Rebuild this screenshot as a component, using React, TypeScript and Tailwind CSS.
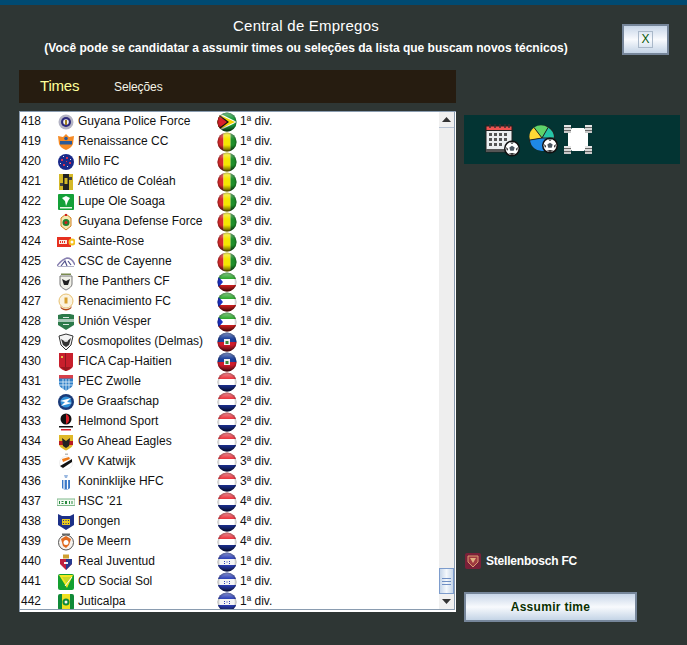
import { useId, type ReactNode } from "react";

type FlagId = "gy" | "gf" | "gq" | "ht" | "nl" | "hn";

type Row = { n: number; name: string; flag: FlagId; div: string };

const ROWS: Row[] = [
  { n: 418, name: "Guyana Police Force", flag: "gy", div: "1" },
  { n: 419, name: "Renaissance CC", flag: "gf", div: "1" },
  { n: 420, name: "Milo FC", flag: "gf", div: "1" },
  { n: 421, name: "Atlético de Coléah", flag: "gf", div: "1" },
  { n: 422, name: "Lupe Ole Soaga", flag: "gf", div: "2" },
  { n: 423, name: "Guyana Defense Force", flag: "gf", div: "3" },
  { n: 424, name: "Sainte-Rose", flag: "gf", div: "3" },
  { n: 425, name: "CSC de Cayenne", flag: "gf", div: "3" },
  { n: 426, name: "The Panthers CF", flag: "gq", div: "1" },
  { n: 427, name: "Renacimiento FC", flag: "gq", div: "1" },
  { n: 428, name: "Unión Vésper", flag: "gq", div: "1" },
  { n: 429, name: "Cosmopolites (Delmas)", flag: "ht", div: "1" },
  { n: 430, name: "FICA Cap-Haitien", flag: "ht", div: "1" },
  { n: 431, name: "PEC Zwolle", flag: "nl", div: "1" },
  { n: 432, name: "De Graafschap", flag: "nl", div: "2" },
  { n: 433, name: "Helmond Sport", flag: "nl", div: "2" },
  { n: 434, name: "Go Ahead Eagles", flag: "nl", div: "2" },
  { n: 435, name: "VV Katwijk", flag: "nl", div: "3" },
  { n: 436, name: "Koninklijke HFC", flag: "nl", div: "3" },
  { n: 437, name: "HSC '21", flag: "nl", div: "4" },
  { n: 438, name: "Dongen", flag: "nl", div: "4" },
  { n: 439, name: "De Meern", flag: "nl", div: "4" },
  { n: 440, name: "Real Juventud", flag: "hn", div: "1" },
  { n: 441, name: "CD Social Sol", flag: "hn", div: "1" },
  { n: 442, name: "Juticalpa", flag: "hn", div: "1" },
];

function FlagArt({ flag }: { flag: FlagId }) {
  switch (flag) {
    case "gy":
      return (
        <>
          <rect width="20" height="20" fill="#1a9a3a" />
          <path d="M0 0L20 10L0 20Z" fill="#fff" />
          <path d="M0 1.500L18 10L0 18.500Z" fill="#f5d400" />
          <path d="M0 1L12 10L0 19Z" fill="#111" />
          <path d="M0 2.500L10 10L0 17.500Z" fill="#d8202a" />
        </>
      );
    case "gf":
      return (
        <>
          <rect width="6.500" height="20" fill="#d42a2a" />
          <rect x="6.500" width="7" height="20" fill="#f6e800" />
          <rect x="13.500" width="6.500" height="20" fill="#1f8f2c" />
        </>
      );
    case "gq":
      return (
        <>
          <rect width="20" height="7" fill="#2aa52a" />
          <rect y="7" width="20" height="6" fill="#fff" />
          <rect y="13" width="20" height="7" fill="#d42020" />
          <path d="M0 3L6 10L0 17Z" fill="#1a2fc0" />
        </>
      );
    case "ht":
      return (
        <>
          <rect width="20" height="10" fill="#1c3f9a" />
          <rect y="10" width="20" height="10" fill="#d01c2c" />
          <rect x="7" y="7" width="6" height="6" fill="#f4f4f4" />
          <rect x="8.500" y="9" width="3" height="3" fill="#3a8a3a" />
        </>
      );
    case "nl":
      return (
        <>
          <rect width="20" height="7" fill="#e8323c" />
          <rect y="7" width="20" height="6" fill="#fff" />
          <rect y="13" width="20" height="7" fill="#1b2f90" />
        </>
      );
    case "hn":
      return (
        <>
          <rect width="20" height="7" fill="#2b3fb5" />
          <rect y="7" width="20" height="6" fill="#f4f4f4" />
          <rect y="13" width="20" height="7" fill="#2b3fb5" />
          <path d="M7 9h1v1H7zM12 9h1v1h-1zM9.500 9.500h1v1h-1zM7 11h1v1H7zM12 11h1v1h-1z" fill="#2b3fb5" />
        </>
      );
  }
}

function FlagBall({ flag }: { flag: FlagId }) {
  const id = useId();
  return (
    <svg width="20" height="20" viewBox="0 0 20 20" className="shrink-0">
      <defs>
        <clipPath id={`${id}c`}>
          <circle cx="10" cy="10" r="9.600" />
        </clipPath>
        <linearGradient id={`${id}l`} x1="0" y1="0" x2="0" y2="1">
          <stop offset="0" stopColor="#fff" stopOpacity="0.5" />
          <stop offset="0.35" stopColor="#fff" stopOpacity="0" />
          <stop offset="0.65" stopColor="#000" stopOpacity="0" />
          <stop offset="1" stopColor="#000" stopOpacity="0.7" />
        </linearGradient>
        <radialGradient id={`${id}r`} cx="0.5" cy="0.5" r="0.5">
          <stop offset="0.72" stopColor="#000" stopOpacity="0" />
          <stop offset="1" stopColor="#000" stopOpacity="0.35" />
        </radialGradient>
      </defs>
      <g clipPath={`url(#${id}c)`}>
        <FlagArt flag={flag} />
        <rect width="20" height="20" fill={`url(#${id}l)`} />
        <rect width="20" height="20" fill={`url(#${id}r)`} />
      </g>
    </svg>
  );
}

const SHIELD = "M2 2H16V11C16 14 12 16 9 17.500C6 16 2 14 2 11Z";

// tiny club crests, only blobs of the right colours at this size
const CRESTS: Record<number, ReactNode> = {
  418: (
    <>
      <circle cx="9" cy="9" r="7.500" fill="#b4b4c4" />
      <circle cx="9" cy="9" r="5" fill="#2d2a7a" />
      <circle cx="9" cy="9" r="2.800" fill="#f2f2f2" />
      <rect x="8" y="7" width="2" height="5" fill="#a08020" />
    </>
  ),
  419: (
    <>
      <path d="M1 3L6 4L9 1L12 4L17 3L16 11C15 14 12 16 9 17C6 16 3 14 2 11Z" fill="#f58a24" />
      <rect x="3" y="8" width="12" height="3.500" fill="#2a5a9a" />
      <circle cx="9" cy="5.500" r="1.800" fill="#2a5a9a" />
    </>
  ),
  420: (
    <>
      <circle cx="9" cy="9" r="8" fill="#1a2a8a" />
      <path d="M4 6h2v2H4zM9 4h2v2H9zM12 9h2v2h-2zM6 11h2v2H6zM9 8h1v1H9z" fill="#d03050" />
      <path d="M6 3h1v1H6zM13 6h1v1h-1zM3 10h1v1H3zM10 13h1v1h-1z" fill="#e8e8f8" />
    </>
  ),
  421: (
    <>
      <rect x="2" y="1" width="14" height="16" fill="#d4b828" />
      <rect x="6" y="1" width="6" height="16" fill="#222" />
      <rect x="7.500" y="5" width="3" height="6" fill="#d4b828" />
      <rect x="3" y="10" width="3" height="3" fill="#444" />
      <rect x="12" y="4" width="3" height="3" fill="#444" />
    </>
  ),
  422: (
    <>
      <rect x="1" y="1" width="16" height="16" rx="1" fill="#14a038" />
      <path d="M5 5L9 3L13 5L11 8L9 13L8 8Z" fill="#fff" />
      <rect x="3" y="14" width="12" height="1.500" fill="#e8f8e8" />
    </>
  ),
  423: (
    <>
      <path d="M9 1L14 5V13L9 17L4 13V5Z" fill="#f4e8b0" stroke="#d08020" strokeWidth="1" />
      <circle cx="9" cy="9.500" r="3.500" fill="#208030" />
      <circle cx="9" cy="9.500" r="1.500" fill="#d02020" />
      <rect x="8" y="1" width="2" height="2" fill="#d02020" />
    </>
  ),
  424: (
    <>
      <rect x="0" y="4" width="14" height="10" fill="#e63020" />
      <rect x="2" y="7" width="8" height="4" fill="#f8e8e0" />
      <path d="M3 8h1v2H3zM5 8h1v2H5zM7 8h1v2H7z" fill="#e63020" />
      <circle cx="15" cy="9" r="3.500" fill="#f4c020" />
      <circle cx="15" cy="9" r="1.500" fill="#fff" />
    </>
  ),
  425: (
    <>
      <path d="M0 13C3 9 6 6 10 5C13 5 16 7 18 12" fill="none" stroke="#8880b0" strokeWidth="1.500" />
      <path d="M4 13L8 8L10 13M11 8L14 12" fill="none" stroke="#50508a" strokeWidth="1.200" />
      <rect x="1" y="13" width="16" height="1" fill="#b0b0c8" />
    </>
  ),
  426: (
    <>
      <path d="M3 3H15V11C15 14 11 16 9 17C7 16 3 14 3 11Z" fill="#f0f0e8" stroke="#777" strokeWidth="1" />
      <path d="M5 6L9 8L13 6L11 12H7Z" fill="#222" />
      <rect x="4" y="0.500" width="10" height="1.500" fill="#7a8a50" />
    </>
  ),
  427: (
    <>
      <circle cx="9" cy="8" r="7" fill="#fbf3df" stroke="#e8c070" strokeWidth="1" />
      <rect x="7.500" y="4.500" width="3" height="6" fill="#d8a030" />
      <path d="M3 13C6 17 12 17 15 13L14 15.500C11 18 7 18 4 15.500Z" fill="#b04818" />
    </>
  ),
  428: (
    <>
      <path d="M1 2L5 1H13L17 2V12L9 17L1 12Z" fill="#2c7a4a" />
      <rect x="1" y="6" width="16" height="3" fill="#a8c8b8" />
      <path d="M6 4h6v1H6zM6 11h6v1H6z" fill="#d8e8e0" />
    </>
  ),
  429: (
    <>
      <path d="M2 3L9 1L16 3L14 12L9 17L4 12Z" fill="#f4f4f4" stroke="#333" strokeWidth="1" />
      <path d="M4 6L9 9L14 5L12 12L9 14L6 12Z" fill="#333" />
      <rect x="7" y="7" width="4" height="1.500" fill="#ddd" />
    </>
  ),
  430: (
    <>
      <path d="M2 0H16V13C16 15 12 17.500 9 18C6 17.500 2 15 2 13Z" fill="#c81f2c" />
      <rect x="8" y="0" width="1" height="18" fill="#8a1820" />
      <rect x="4" y="3" width="2" height="2" fill="#e8c050" />
      <path d="M3 14L15 14L9 18Z" fill="#9a1820" />
    </>
  ),
  431: (
    <>
      <path d={SHIELD} fill="#2f80c8" />
      <rect x="2" y="2" width="14" height="3.500" fill="#d8404a" />
      <path d="M2 9H16M2 12H16M6 6V16M9 6V17M12 6V16" stroke="#e8f4fc" strokeWidth="0.800" />
    </>
  ),
  432: (
    <>
      <circle cx="9" cy="9" r="8" fill="#1a3a78" />
      <circle cx="9" cy="9" r="5.500" fill="#2f90d8" />
      <path d="M3 8L14 5L10 9L15 10L4 13L8 9Z" fill="#fff" />
    </>
  ),
  433: (
    <>
      <circle cx="9" cy="6" r="5.500" fill="#111" />
      <path d="M9 1A5.500 5.500 0 0 1 9 11Z" fill="#d82028" />
      <rect x="2" y="13" width="14" height="1.500" fill="#111" />
      <rect x="4" y="16" width="10" height="1.500" fill="#d82028" />
    </>
  ),
  434: (
    <>
      <path d={SHIELD} fill="#e0b828" />
      <rect x="2" y="8" width="14" height="4" fill="#b81c24" />
      <path d="M5 5L9 8L13 5L12 13L9 15L6 13Z" fill="#222" />
    </>
  ),
  435: (
    <>
      <circle cx="9" cy="10" r="6.500" fill="#fff" stroke="#ddd" strokeWidth="0.500" />
      <path d="M3 13L15 6L15 9L6 15Z" fill="#111" />
      <path d="M5 6L12 4L13 6L6 9Z" fill="#ee7a18" />
      <rect x="8" y="0.500" width="3" height="1.500" fill="#bbb" />
    </>
  ),
  436: (
    <>
      <path d="M5 7H13V15C11 17 7 17 5 15Z" fill="#3a78c8" />
      <path d="M7 7V16M10.500 7V16" stroke="#fff" strokeWidth="1.200" />
      <path d="M7 2H11L10 5H8Z" fill="#9ab8e0" />
    </>
  ),
  437: (
    <>
      <rect x="0" y="6" width="18" height="6.500" fill="#f4faf4" stroke="#60a870" strokeWidth="0.800" />
      <path d="M2 8h1v3H2zM4.500 8h2v1h-2zM4.500 10h2v1h-2zM8 8h2v3H8zM12 8h1v3h-1zM14.500 8h1v3h-1z" fill="#2a8a40" />
    </>
  ),
  438: (
    <>
      <path d="M1 1L5 3H13L17 1V12L9 17L1 12Z" fill="#1c3088" />
      <path d="M5 6h8v6H5z" fill="#e8c820" />
      <path d="M6 7h1v1H6zM8.500 7h1v1h-1zM11 7h1v1h-1zM6 10h1v1H6zM8.500 10h1v1h-1zM11 10h1v1h-1z" fill="#1c3088" />
    </>
  ),
  439: (
    <>
      <circle cx="9" cy="9.500" r="7.500" fill="#f6f2ee" stroke="#555" strokeWidth="1" />
      <path d="M4 6L9 3L14 6L12 12L9 15L6 13Z" fill="#e06a20" />
      <circle cx="9" cy="9.500" r="2.500" fill="#fff" />
      <rect x="5" y="0.500" width="8" height="1.500" fill="#666" />
    </>
  ),
  440: (
    <>
      <path d="M3 6H15V11L9 17L3 11Z" fill="#c02040" />
      <path d="M9 6H15V11L9 17Z" fill="#283a90" />
      <rect x="6" y="1.500" width="6" height="4" fill="#d0a030" />
      <rect x="7" y="9" width="4" height="2" fill="#f4f4f4" />
    </>
  ),
  441: (
    <>
      <rect x="1" y="1" width="16" height="16" rx="2" fill="#14a030" />
      <path d="M2 2H16L10 15Z" fill="#f2e820" />
      <path d="M5 4H14L10 11Z" fill="#c8d828" />
      <path d="M8 13L15 4" stroke="#f8f8f8" strokeWidth="1" />
    </>
  ),
  442: (
    <>
      <rect x="1" y="1" width="16" height="16" rx="2" fill="#108a38" />
      <rect x="5" y="1" width="8" height="16" fill="#f0e020" />
      <circle cx="9" cy="9" r="3.500" fill="#108a38" />
      <circle cx="9" cy="9" r="1.500" fill="#f4f4f4" />
    </>
  ),
};

function Crest({ n }: { n: number }) {
  return (
    <svg width="18" height="18" viewBox="0 0 18 18" className="mb-[1px] shrink-0">
      {CRESTS[n]}
    </svg>
  );
}

function ListRow({ row }: { row: Row }) {
  return (
    <div className="flex h-5 shrink-0 items-center text-[12px] text-[#111]">
      <span className="mb-[2px] ml-[1px] w-[36px] shrink-0">{row.n}</span>
      <Crest n={row.n} />
      <span className="mb-[2px] ml-[3px] w-[139px] shrink-0 whitespace-nowrap tracking-[0.02px]">{row.name}</span>
      <FlagBall flag={row.flag} />
      <span className="mb-[2px] ml-[3px] whitespace-nowrap">{row.div}ª div.</span>
    </div>
  );
}

function Arrow({ up }: { up?: boolean }) {
  return (
    <svg width="9" height="5" viewBox="0 0 9 5">
      <path d={up ? "M4.500 0L9 5H0Z" : "M0 0H9L4.500 5Z"} fill="#333" />
    </svg>
  );
}

function ScrollBar() {
  return (
    <div className="flex w-[15px] shrink-0 flex-col bg-[#eeeeee]">
      <div className="flex h-[16px] items-center justify-center border-b border-[#b8c4d4] bg-[#f0f0f0]">
        <Arrow up />
      </div>
      <div className="flex-1" />
      <div className="flex h-[26px] flex-col items-center justify-center gap-[2px] border border-[#7d9ccc] bg-gradient-to-r from-[#c6d6ea] via-[#f4f8fc] to-[#c6d6ea]">
        <div className="h-px w-[9px] bg-[#6f8fc4]" />
        <div className="h-px w-[9px] bg-[#6f8fc4]" />
        <div className="h-px w-[9px] bg-[#6f8fc4]" />
      </div>
      <div className="flex h-[15px] items-center justify-center bg-[#f0f0f0]">
        <Arrow />
      </div>
    </div>
  );
}

function SoccerBall({ x, y }: { x: number; y: number }) {
  return (
    <g transform={`translate(${x} ${y})`}>
      <circle r="8" fill="#111" />
      <circle r="6.500" fill="#fff" />
      <path d="M0 -2.800L2.700 -0.900L1.700 2.300H-1.700L-2.700 -0.900Z" fill="#4a5560" />
      <path d="M-2 -6L2 -6L0 -4.500ZM6 -1.500L5 2.500L3.800 0.500ZM-6 -1.500L-5 2.500L-3.800 0.500ZM-3.500 5.300L0 4.500L3.500 5.300L0 6.400Z" fill="#222" />
    </g>
  );
}

function CalendarIcon() {
  return (
    <svg width="36" height="34" viewBox="0 0 36 34">
      <rect x="1" y="3" width="26" height="26" fill="#eceff1" stroke="#222" strokeWidth="1" />
      <rect x="1" y="3" width="26" height="4.500" fill="#ef5350" stroke="#222" strokeWidth="1" />
      <path d="M5 1v4M10 1v4M15 1v4M20 1v4M24 1v4" stroke="#333" strokeWidth="1.500" />
      <path d="M4 10h3v3H4zM9 10h3v3H9zM14 10h3v3h-3zM19 10h3v3h-3zM4 15h3v3H4zM9 15h3v3H9zM14 15h3v3h-3zM19 15h3v3h-3zM4 20h3v3H4zM9 20h3v3H9zM14 20h3v3h-3z" fill="#555" />
      <rect x="1" y="26" width="26" height="3" fill="#555" />
      <SoccerBall x={27} y={25.500} />
    </svg>
  );
}

function PieIcon() {
  return (
    <svg width="32" height="32" viewBox="0 0 32 32">
      <circle cx="14" cy="14" r="13" fill="#222" />
      <path d="M14 14L6 3.500A12 12 0 0 1 20 3.600Z" fill="#5ed36a" />
      <path d="M14 14L20 3.600A12 12 0 0 1 26 14Z" fill="#26c6a8" />
      <path d="M14 14L2 16A12 12 0 0 1 6 3.500Z" fill="#fdd835" />
      <path d="M14 14L26 14A12 12 0 0 1 2 16Z" fill="#1e88e5" />
      <path d="M14 14L26 14M14 14L2 16M14 14L6 3.500M14 14L20 3.600" stroke="#222" strokeWidth="1" />
      <SoccerBall x={22} y={21.500} />
    </svg>
  );
}

function FormationIcon() {
  const chip = (x: number, y: number) => (
    <g key={`${x}-${y}`}>
      <rect x={x} y={y} width="7" height="2" fill="#e4e4e4" />
      <rect x={x} y={y + 2} width="7" height="1" fill="#666" />
      <rect x={x} y={y + 3} width="7" height="2" fill="#d8d8d8" />
      <rect x={x} y={y + 5} width="7" height="1" fill="#666" />
      <rect x={x} y={y + 6} width="7" height="2" fill="#c8c8c8" />
    </g>
  );
  return (
    <svg width="28" height="30" viewBox="0 0 28 30">
      <path d="M8 3H20L24 8V21L20 26H8L4 21V8Z" fill="#fff" />
      {chip(0, 0)}
      {chip(21, 0)}
      {chip(0, 21)}
      {chip(21, 21)}
    </svg>
  );
}

function ActionButton({ children, className }: { children: ReactNode; className: string }) {
  return (
    <button
      className={`flex items-center justify-center border-2 border-[#76869a] bg-gradient-to-b from-[#c8d6e8] via-[#f8fafd] to-[#c4d4e6] ${className}`}
    >
      {children}
    </button>
  );
}

export default function App() {
  return (
    <div
      className="flex h-[645px] w-[687px] flex-col overflow-hidden bg-[#2e3634] text-white"
      style={{ fontFamily: '"Liberation Sans", Arial, sans-serif' }}
    >
      <div className="h-[5px] shrink-0 bg-[#004a72]" />

      <div className="flex h-[65px] shrink-0">
        <div className="flex w-[612px] flex-col items-center pt-[12px]">
          <h1 className="text-[15px] leading-[18px] tracking-[0.22px]">Central de Empregos</h1>
          <p className="mt-[6px] text-[12px] font-bold leading-[14px]">
            (Você pode se candidatar a assumir times ou seleções da lista que buscam novos técnicos)
          </p>
        </div>
        <div className="ml-[10px] pt-[19px]">
          <ActionButton className="h-[31px] w-[47px]">
            <span className="border border-[#a9b8c9] px-[2px] text-[12px] leading-[15px] text-[#0a5a0a]">X</span>
          </ActionButton>
        </div>
      </div>

      <div className="flex min-h-0 flex-1 pl-[19px]">
        <div className="flex w-[437px] shrink-0 flex-col">
          <div className="flex h-[33px] shrink-0 items-center bg-[#261c10] pl-[21px]">
            <span className="w-[74px] text-[15px] tracking-[-0.2px] text-[#ffff99]">Times</span>
            <span className="text-[12px] tracking-[-0.1px] text-[#f4f4e8]">Seleções</span>
          </div>

          <div className="mt-[8px] flex h-[501px] shrink-0 border-l border-t border-[#8a9cb0] bg-white">
            <div className="mb-[2px] mr-[1px] flex w-[435px] border-b border-r border-[#8a9cb0]">
              <div className="flex min-w-0 flex-1 flex-col overflow-hidden">
                {ROWS.map((row) => (
                  <ListRow key={row.n} row={row} />
                ))}
              </div>
              <div className="flex w-[16px] shrink-0 justify-end">
                <ScrollBar />
              </div>
            </div>
          </div>
        </div>

        <div className="ml-[8px] flex w-[216px] shrink-0 flex-col">
          <div className="mt-[45px] flex h-[49px] shrink-0 items-center bg-[#033433] pl-[21px]">
            <CalendarIcon />
            <div className="ml-[7px]">
              <PieIcon />
            </div>
            <div className="ml-[4px]">
              <FormationIcon />
            </div>
          </div>

          <div className="mt-[389px] flex h-[16px] shrink-0 items-center">
            <svg width="16" height="16" viewBox="0 0 16 16" className="ml-[1px] shrink-0">
              <rect width="16" height="16" rx="2" fill="#7a2038" />
              <path d="M3 3H13V9L8 14L3 9Z" fill="#a03a40" stroke="#d89a70" strokeWidth="1" />
              <path d="M5 5H11L8 10Z" fill="#e0b080" />
            </svg>
            <span className="ml-[5px] text-[12px] font-bold tracking-[-0.2px]">Stellenbosch FC</span>
          </div>

          <ActionButton className="mt-[23px] h-[30px] w-[173px] shrink-0">
            <span className="text-[12px] font-bold tracking-[0.3px] text-[#0a3000]">Assumir time</span>
          </ActionButton>
        </div>
      </div>
    </div>
  );
}
